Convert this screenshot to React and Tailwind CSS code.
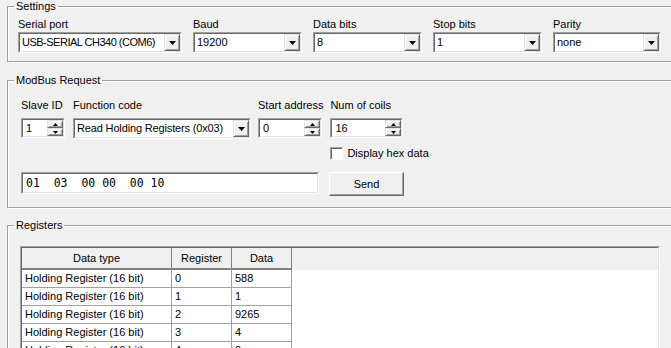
import React from 'react';

const Arrow = ({ up, small }) => (
  <svg width={small ? 5 : 7} height={small ? 3 : 4} viewBox={small ? '0 0 5 3' : '0 0 7 4'}>
    <polygon
      points={
        small
          ? up ? '2.5,0 5,3 0,3' : '0,0 5,0 2.5,3'
          : up ? '3.5,0 7,4 0,4' : '0,0 7,0 3.5,4'
      }
      fill="#000"
    />
  </svg>
);

// classic sunken edit frame
const Sunken = ({ className = '', children }) => (
  <div className={`flex border border-t-[#a0a0a0] border-l-[#a0a0a0] border-r-white border-b-white ${className}`}>
    <div className="flex flex-1 min-w-0 border border-t-[#696969] border-l-[#696969] border-r-[#e3e3e3] border-b-[#e3e3e3] bg-white">
      {children}
    </div>
  </div>
);

const Combo = ({ value, className, textClass = '' }) => (
  <Sunken className={`h-[21px] ${className}`}>
    <div className={`flex-1 overflow-hidden whitespace-nowrap pl-[2px] leading-[17px] ${textClass}`}>{value}</div>
    <div className="flex w-[16px] items-center justify-center border border-t-[#e3e3e3] border-l-[#e3e3e3] border-r-[#696969] border-b-[#696969] bg-[#f0f0f0] shadow-[inset_1px_1px_0_#fff,inset_-1px_-1px_0_#a0a0a0]">
      <Arrow />
    </div>
  </Sunken>
);

const SpinBtn = ({ up }) => (
  <div className="flex flex-1 items-center justify-center border border-t-[#e3e3e3] border-l-[#e3e3e3] border-r-[#696969] border-b-[#696969] bg-[#f0f0f0] shadow-[inset_1px_1px_0_#fff,inset_-1px_-1px_0_#a0a0a0]">
    <Arrow up={up} small />
  </div>
);

const Spin = ({ value, className }) => (
  <Sunken className={`h-[20px] ${className}`}>
    <div className="flex-1 pl-[3px] leading-[16px]">{value}</div>
    <div className="flex w-[16px] flex-col">
      <SpinBtn up />
      <SpinBtn />
    </div>
  </Sunken>
);

const Group = ({ title, className = '', children }) => (
  <fieldset className={`ml-[7px] w-[700px] border border-[#a0a0a0] shadow-[inset_1px_1px_0_#fff,1px_1px_0_#fff] ${className}`}>
    <legend className="ml-[6px] px-[2px] leading-[13px]">{title}</legend>
    {children}
  </fieldset>
);

const Field = ({ label, children }) => (
  <div className="flex flex-col">
    <div className="leading-[13px]">{label}</div>
    {children}
  </div>
);

const rows = [
  ['0', '588'],
  ['1', '1'],
  ['2', '9265'],
  ['3', '4'],
  ['4', '0'],
  ['5', '0'],
];

export default function App() {
  return (
    <div className="h-[348px] w-[671px] overflow-hidden bg-[#f0f0f0] font-['Liberation_Sans',Arial,sans-serif] text-[11px] text-black">
      <Group title="Settings">
        <div className="flex gap-[11px] pt-[5px] pb-[8px] pl-[10px]">
          <Field label="Serial port">
            <Combo value="USB-SERIAL CH340 (COM6)" className="mt-[1px] w-[164px]" textClass="tracking-[-0.5px]" />
          </Field>
          <Field label="Baud">
            <Combo value="19200" className="mt-[1px] w-[109px]" />
          </Field>
          <Field label="Data bits">
            <Combo value="8" className="mt-[1px] w-[109px]" />
          </Field>
          <Field label="Stop bits">
            <Combo value="1" className="mt-[1px] w-[109px]" />
          </Field>
          <Field label="Parity">
            <Combo value="none" className="mt-[1px] w-[108px]" />
          </Field>
        </div>
      </Group>

      <Group title="ModBus Request" className="mt-[12px]">
        <div className="pt-[12px] pb-[11px] pl-[13px]">
          <div className="flex items-start">
            <Field label="Slave ID">
              <Spin value="1" className="mt-[6px] w-[44px]" />
            </Field>
            <div className="ml-[8px]">
              <Field label="Function code">
                <Combo value="Read Holding Registers (0x03)" className="mt-[6px] h-[20px] w-[178px]" textClass="tracking-[-0.15px]" />
              </Field>
            </div>
            <div className="ml-[7px]">
              <Field label="Start address">
                <Spin value="0" className="mt-[6px] w-[64px]" />
              </Field>
            </div>
            <div className="ml-[7px]">
              <Field label="Num of coils">
                <Spin value="16" className="mt-[6px] w-[73px]" />
              </Field>
              <label className="mt-[9px] flex items-center gap-[4px] leading-[13px]">
                <span className="h-[13px] w-[13px] border border-t-[#a0a0a0] border-l-[#a0a0a0] border-r-white border-b-white bg-white shadow-[inset_1px_1px_0_#696969]" />
                Display hex data
              </label>
            </div>
          </div>
          <div className="mt-[12px] flex items-start">
            <Sunken className="h-[22px] w-[298px]">
              <div className="whitespace-pre pl-[3px] font-['DejaVu_Sans_Mono',monospace] text-[11.5px] leading-[18px]">01  03  00 00  00 10</div>
            </Sunken>
            <button className="ml-[10px] h-[24px] w-[75px] border border-t-white border-l-white border-r-[#696969] border-b-[#696969] bg-[#f0f0f0] shadow-[inset_-1px_-1px_0_#a0a0a0]">
              Send
            </button>
          </div>
        </div>
      </Group>

      <Group title="Registers" className="mt-[11px]">
        <div className="pt-[14px] pl-[12px]">
          <div className="w-[640px] border border-t-[#a0a0a0] border-l-[#a0a0a0] border-r-white border-b-white">
            <div className="border border-t-[#696969] border-l-[#696969] border-r-[#e3e3e3] border-b-[#e3e3e3] bg-white">
              <div className="grid h-[22px] grid-cols-[150px_60px_60px_1fr] bg-[#f0f0f0]">
                <div className="flex items-center justify-center border-r border-b-2 border-[#808080]">Data type</div>
                <div className="flex items-center justify-center border-r border-b-2 border-[#808080]">Register</div>
                <div className="flex items-center justify-center border-r border-b-2 border-[#808080]">Data</div>
                <div className="bg-[#f0f0f0]" />
              </div>
              {rows.map(([reg, val]) => (
                <div key={reg} className="grid h-[18px] grid-cols-[150px_60px_60px_1fr]">
                  <div className="border-r border-b border-[#a0a0a0] pl-[3px] leading-[17px]">Holding Register (16 bit)</div>
                  <div className="border-r border-b border-[#a0a0a0] pl-[3px] leading-[17px]">{reg}</div>
                  <div className="border-r border-b border-[#a0a0a0] pl-[3px] leading-[17px]">{val}</div>
                  <div />
                </div>
              ))}
            </div>
          </div>
        </div>
      </Group>
    </div>
  );
}
